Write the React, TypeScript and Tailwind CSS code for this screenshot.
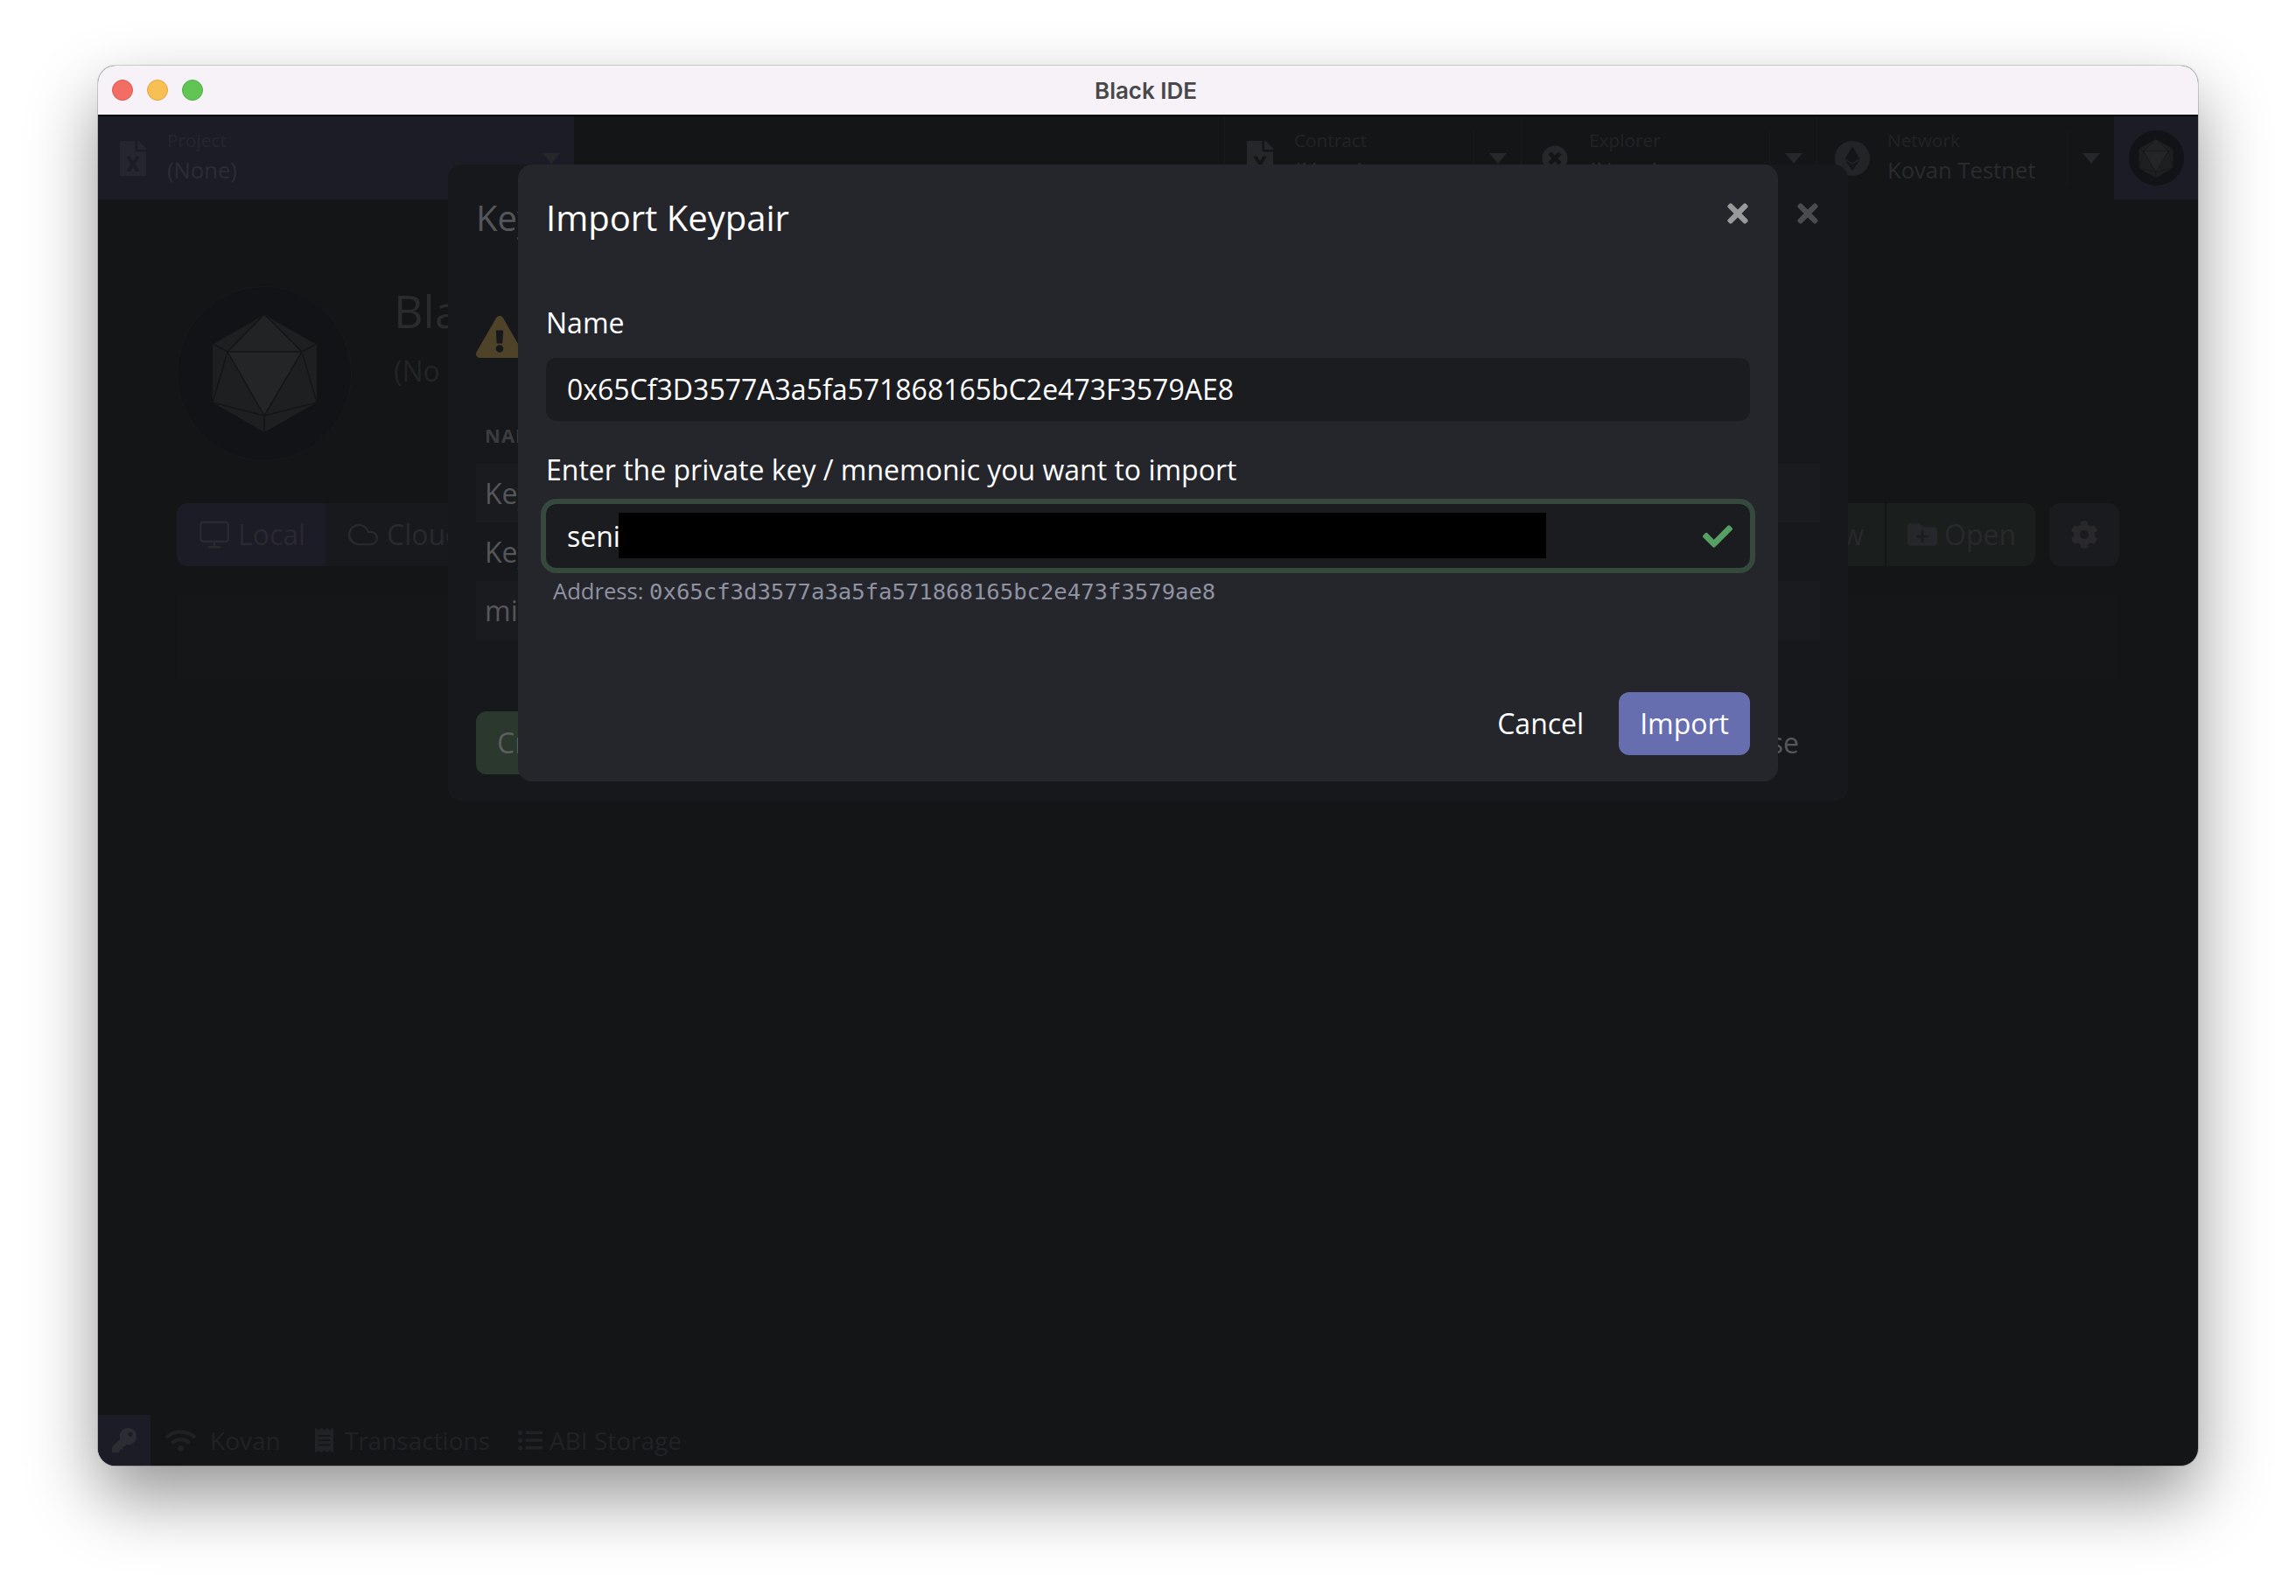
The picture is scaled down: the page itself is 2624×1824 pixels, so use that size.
import { Cloud, Monitor } from "lucide-react";
import {
  FaCheck,
  FaCog,
  FaEthereum,
  FaExclamationTriangle,
  FaFileExcel,
  FaFolderPlus,
  FaKey,
  FaListUl,
  FaReceipt,
  FaTimes,
  FaTimesCircle,
  FaWifi,
} from "react-icons/fa";

const sans = "font-['Open_Sans','Noto_Sans',sans-serif]";

function Caret() {
  return (
    <svg width="22" height="12" viewBox="0 0 22 12" className="fill-[#26272a]">
      <path d="M1 0h20L11 12z" />
    </svg>
  );
}

function Logo({ className }: { className: string }) {
  return (
    <svg viewBox="0 0 121 136" className={className}>
      <path d="M60 0 120 34V101L60 135 1 101V34z" fill="#1e1f21" />
      <path d="M18 43H103L60 116z" fill="#242527" />
      <path d="M60 0 18 43H103z" fill="#222325" />
      <path
        d="M60 0 1 34 18 43 1 101 60 116 120 101 103 43 120 34zM18 43H103L60 116zM60 0 18 43M60 0 103 43M60 116V135"
        fill="none"
        stroke="#141517"
        strokeWidth="1.5"
      />
    </svg>
  );
}

function TopSelect({
  icon,
  label,
  value,
  left,
  width,
}: {
  icon: React.ReactNode;
  label: string;
  value: string;
  left: string;
  width: string;
}) {
  return (
    <div className={`flex h-full items-center border-l border-[#18191c] ${width}`}>
      <div className={`flex h-full flex-1 items-center ${left}`}>
        {icon}
        <div className="flex flex-col pb-[2px]">
          <span className="mb-[2px] text-[20.8px] leading-[28px] text-[#222326]">{label}</span>
          <span className="text-[25.6px] leading-[38px] text-[#2a2b2e]">{value}</span>
        </div>
      </div>
      <div className="flex h-[64px] w-[54px] items-center justify-center border-l border-[#18191c]">
        <Caret />
      </div>
    </div>
  );
}

function BackDialog() {
  return (
    <div className="absolute left-[400px] top-[55px] flex h-[728px] w-[1600px] flex-col rounded-[16px] bg-[#17181b] px-[32px]">
      <div className="flex h-[122px] items-center justify-between">
        <span className="text-[40px] text-[#55565a]">Key</span>
        <FaTimes className="mb-[10px] mr-[-3px] size-[34px] text-[#4a4b4e]" />
      </div>
      <div className="mt-[48px] h-[48px]">
        <FaExclamationTriangle className="size-[54px] text-[#4e4329]" />
      </div>
      <div className="mt-[75px] pl-[10px] text-[22px] font-bold tracking-[1px] text-[#3b3c40]">NAME</div>
      <div className="mt-[16px] flex flex-col text-[32px] text-[#55565a]">
        <div className="flex h-[67px] items-center bg-[#1a1b1e] pl-[10px]">Key</div>
        <div className="flex h-[67px] items-center bg-[#17181b] pl-[10px]">Key</div>
        <div className="flex h-[68px] items-center bg-[#1a1b1e] pl-[10px]">mi</div>
      </div>
      <div className="mt-[81px] flex items-center justify-between pr-[24px]">
        <div className="flex h-[72px] items-center rounded-[12px] bg-[#2a382d] px-[24px] text-[32px] text-[#5c5e60]">
          Create
        </div>
        <span className="text-[32px] text-[#55565a]">Close</span>
      </div>
    </div>
  );
}

function ImportDialog() {
  return (
    <div className="absolute left-[480px] top-[55px] flex h-[705px] w-[1440px] flex-col rounded-[16px] bg-[#25262b] px-[32px]">
      <div className="flex h-[122px] items-center justify-between">
        <span className="text-[40px] text-white">Import Keypair</span>
        <FaTimes className="mb-[10px] mr-[-3px] size-[34px] text-[#98999b]" />
      </div>
      <label className="mt-[37px] text-[32px] leading-[44px] text-white">Name</label>
      <div className="mt-[18px] flex h-[72px] items-center rounded-[12px] bg-[#1b1c20] px-[24px] text-[32px] text-white">
        0x65Cf3D3577A3a5fa571868165bC2e473F3579AE8
      </div>
      <label className="mt-[34px] text-[32px] leading-[44px] text-white">
        Enter the private key / mnemonic you want to import
      </label>
      <div className="relative mt-[17px] flex h-[73px] items-center rounded-[12px] bg-[#1b1c20] px-[24px] text-[32px] text-white shadow-[0_0_0_6px_#35493d]">
        seni
        <div className="absolute left-[83px] top-[10px] h-[52px] w-[1060px] bg-black" />
        <FaCheck className="absolute right-[20px] top-[20px] size-[34px] text-[#57a064]" />
      </div>
      <div className="mt-[9px] flex items-baseline pl-[8px] text-[25.6px] leading-[36px] text-[#8e92a2]">
        <span>Address:&nbsp;</span>
        <code className="font-['DejaVu_Sans_Mono',monospace]">0x65cf3d3577a3a5fa571868165bc2e473f3579ae8</code>
      </div>
      <div className="mt-[97px] flex items-center justify-end gap-[16px]">
        <span className="flex h-[72px] items-center px-[24px] text-[32px] text-white">Cancel</span>
        <span className="flex h-[72px] items-center rounded-[12px] bg-[#666eb0] px-[24px] text-[32px] text-white">
          Import
        </span>
      </div>
    </div>
  );
}

export default function App() {
  return (
    <div className={`flex h-[1824px] w-[2624px] items-start justify-center bg-white pt-[75px] ${sans}`}>
      <div className="flex h-[1600px] w-[2400px] flex-col overflow-hidden rounded-[20px] bg-[#141517] shadow-[0_36px_80px_rgba(0,0,0,0.42),0_0_0_1px_rgba(0,0,0,0.16)]">
        <div className="flex h-[58px] shrink-0 items-center border-b-2 border-black bg-[#f6f2f8] pl-[16px]">
          <div className="flex gap-[16px]">
            <div className="size-[24px] rounded-full border border-[#e0564e] bg-[#f26d64]" />
            <div className="size-[24px] rounded-full border border-[#e0a63f] bg-[#f8bf52]" />
            <div className="size-[24px] rounded-full border border-[#4dae47] bg-[#61c554]" />
          </div>
          <span className="ml-[1019px] font-['Inter',sans-serif] text-[26px] font-semibold text-[#48484a]">Black IDE</span>
        </div>

        <div className="relative flex min-h-0 flex-1 flex-col">
          <div className="flex h-[95px] shrink-0 items-center">
            <div className="flex h-full w-[544px] items-center bg-[#1b1c26] pl-[25px] pr-[15px]">
              <FaFileExcel className="mr-[24px] h-[40px] w-[30px] text-[#26272e]" />
              <div className="flex flex-1 flex-col pb-[2px]">
                <span className="mb-[2px] text-[20.8px] leading-[28px] text-[#25262d]">Project</span>
                <span className="text-[25.6px] leading-[38px] text-[#2c2d34]">(None)</span>
              </div>
              <Caret />
            </div>
            <div className="flex-1" />
            <TopSelect
              icon={<FaFileExcel className="mr-[24px] h-[40px] w-[30px] text-[#26272a]" />}
              label="Contract"
              value="(None)"
              left="pl-[25px]"
              width="w-[339px]"
            />
            <TopSelect
              icon={<FaTimesCircle className="mr-[24px] size-[30px] text-[#26272a]" />}
              label="Explorer"
              value="(None)"
              left="pl-[23px]"
              width="w-[338px]"
            />
            <TopSelect
              icon={
                <div className="mr-[20px] flex size-[40px] items-center justify-center rounded-full bg-[#232427]">
                  <FaEthereum className="size-[28px] text-[#141517]" />
                </div>
              }
              label="Network"
              value="Kovan Testnet"
              left="pl-[20px]"
              width="w-[340px]"
            />
            <div className="flex h-full w-[96px] items-center justify-center bg-[#1b1c26]">
              <div className="flex size-[63px] items-center justify-center rounded-full bg-[#121316]">
                <Logo className="h-[46px] w-[40px]" />
              </div>
            </div>
          </div>

          <div className="flex min-h-0 flex-1 flex-col px-[90px] pt-[99px]">
            <div className="flex">
              <div className="flex size-[200px] items-center justify-center rounded-full border border-[#18191c] bg-[#121316]">
                <Logo className="h-[136px] w-[121px]" />
              </div>
              <div className="ml-[48px] mt-[-7px]">
                <div className="text-[52px] leading-[70px] text-[#2a2b2d]">Black</div>
                <div className="mt-[12px] text-[32px] leading-[44px] text-[#232427]">(No</div>
              </div>
            </div>
            <div className="mt-[48px] flex h-[72px] w-[2220px] justify-between">
              <div className="flex overflow-hidden rounded-[12px] bg-[#18191c]">
                <div className="flex w-[170px] items-center bg-[#1b1c26] pl-[24px] text-[32px] text-[#29292e]">
                  <Monitor className="mr-[8px] size-[38px] text-[#29292e]" strokeWidth={1.5} />
                  Local
                </div>
                <div className="flex w-[200px] items-center pl-[24px] text-[32px] text-[#29292e]">
                  <Cloud className="mr-[8px] size-[38px] text-[#29292e]" strokeWidth={1.5} />
                  Cloud
                </div>
              </div>
              <div className="flex gap-[16px]">
                <div className="flex overflow-hidden rounded-[12px] gap-[2px]">
                  <div className="flex w-[170px] items-center justify-end bg-[#1a1e1d] pr-[24px] text-[32px] text-[#28292b]">New</div>
                  <div className="flex w-[170px] items-center bg-[#1a1e1d] pl-[24px] text-[32px] text-[#28292b]">
                    <FaFolderPlus className="mr-[8px] size-[34px] text-[#26272a]" />
                    Open
                  </div>
                </div>
                <div className="flex w-[80px] items-center justify-center rounded-[12px] bg-[#1a1b1e]">
                  <FaCog className="size-[32px] text-[#29292c]" />
                </div>
              </div>
            </div>
            <div className="mt-[32px] h-[96px] w-[2218px] bg-[#151618]" />
          </div>

          <div className="flex h-[58px] shrink-0 items-center text-[28px] text-[#212225]">
            <div className="flex h-full w-[60px] items-center justify-center bg-[#1b1c26]">
              <FaKey className="size-[28px] text-[#2c2d33]" />
            </div>
            <FaWifi className="ml-[17px] size-[35px] text-[#1e2321]" />
            <span className="ml-[16px]">Kovan</span>
            <FaReceipt className="ml-[39px] h-[28px] w-[21px]" />
            <span className="ml-[13px]">Transactions</span>
            <FaListUl className="ml-[32px] size-[28px]" />
            <span className="ml-[8px]">ABI Storage</span>
          </div>

          <BackDialog />
          <ImportDialog />
        </div>
      </div>
    </div>
  );
}
